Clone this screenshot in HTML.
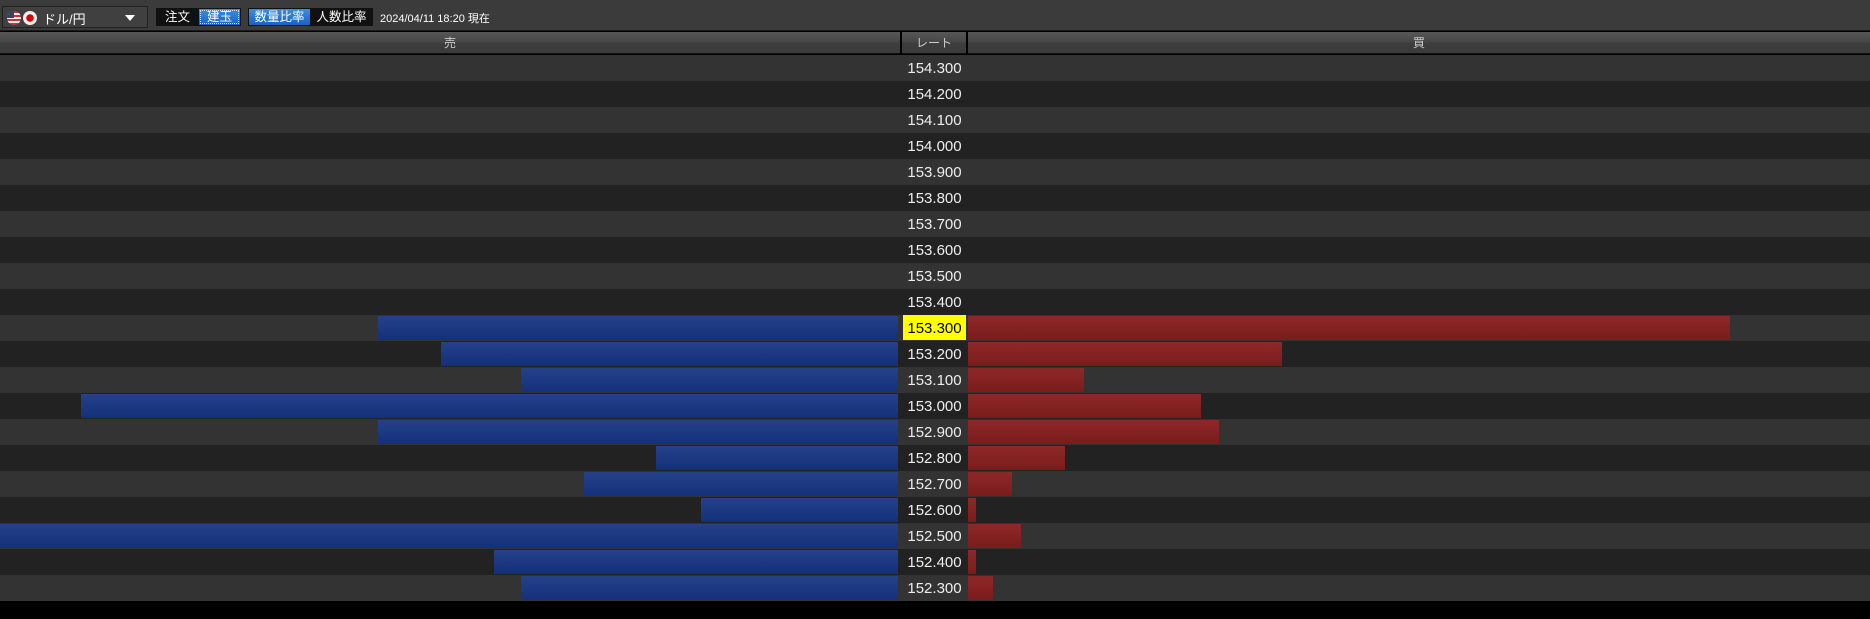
<!DOCTYPE html>
<html><head><meta charset="utf-8"><style>
*{margin:0;padding:0;box-sizing:border-box}
body{width:1870px;height:619px;background:#000;overflow:hidden;font-family:"Liberation Sans","Noto Sans CJK JP",sans-serif;position:relative}
.top{position:absolute;left:0;top:0;width:1870px;height:31px;background:#3b3b3b;border-bottom:1px solid #1a1a1a}
.dd{position:absolute;left:2px;top:6px;width:146px;height:22px;border:1px solid #222;background:#404040}
.dd .t{position:absolute;left:40px;top:2px;color:#fff;font-size:13px}
.dd .arr{position:absolute;right:12px;top:8px;width:0;height:0;border-left:5px solid transparent;border-right:5px solid transparent;border-top:6px solid #fff}
.flag{position:absolute;top:4px;width:14px;height:14px;border-radius:50%;overflow:hidden}
.btn{position:absolute;top:8px;height:18px;font-size:12.5px;color:#fff;text-align:center;line-height:17px;border:1px solid #111;background:#111}
.btn.b{background:linear-gradient(#3c8de0,#1a62c0)}
.date{position:absolute;left:380px;top:10px;font-size:11px;color:#fff}
.hdr{position:absolute;top:32px;height:22px;background:linear-gradient(#575757,#464646 50%,#3e3e3e 51%,#3a3a3a);color:#ccc;font-size:12px;text-align:center;line-height:22px;border-bottom:1px solid #111}
.row{position:absolute;left:0;width:1870px;height:26px}
.rate{position:absolute;left:903px;width:63px;height:25px;top:0;text-align:center;color:#eee;font-size:15px;line-height:27px}
.blue{position:absolute;height:24px;top:1px;background:linear-gradient(#25418a,#15307a)}
.red{position:absolute;height:24px;top:1px;left:968px;background:linear-gradient(#8e2828,#7a1c1c)}
</style></head><body>
<div class="top">
 <div class="dd"><div class="flag" style="left:4px;background:repeating-linear-gradient(#c33 0 2px,#eee 2px 4px)"><div style="width:7px;height:7px;background:#346"></div></div><div class="flag" style="left:20px;background:radial-gradient(#d00 35%,#eee 40%)"></div><span class="t">ドル/円</span><div class="arr"></div></div>
 <div class="btn" style="left:156px;width:43px">注文</div>
 <div class="btn b" style="left:198px;width:43px;outline:1px dotted #cde;outline-offset:-3px">建玉</div>
 <div class="btn b" style="left:248px;width:63px">数量比率</div>
 <div class="btn" style="left:310px;width:63px">人数比率</div>
 <div class="date">2024/04/11 18:20 現在</div>
</div>
<div class="hdr" style="left:0;width:900px">売</div>
<div class="hdr" style="left:902px;width:64px">レート</div>
<div class="hdr" style="left:968px;width:902px">買</div>
<div id="rows"></div>
<script>
var rates=["154.300","154.200","154.100","154.000","153.900","153.800","153.700","153.600","153.500","153.400","153.300","153.200","153.100","153.000","152.900","152.800","152.700","152.600","152.500","152.400","152.300"];
var bl={10:378,11:441,12:521,13:81,14:378,15:656,16:584,17:701,18:0,19:494,20:521};
var rd={10:1730,11:1282,12:1084,13:1201,14:1219,15:1065,16:1012,17:976,18:1021,19:976,20:993};
var h="";
for(var i=0;i<21;i++){
 h+='<div class="row" style="top:'+(55+i*26)+'px;background:'+(i%2?'#222':'#333')+'">';
 if(bl[i]!==undefined)h+='<div class="blue" style="left:'+bl[i]+'px;width:'+(898-bl[i])+'px"></div>';
 if(rd[i]!==undefined)h+='<div class="red" style="width:'+(rd[i]-968)+'px"></div>';
 h+='<div class="rate" style="'+(i==10?'background:#ff0;color:#000;top:0':'')+'">'+rates[i]+'</div></div>';
}
document.getElementById("rows").innerHTML=h;
</script>
</body></html>
